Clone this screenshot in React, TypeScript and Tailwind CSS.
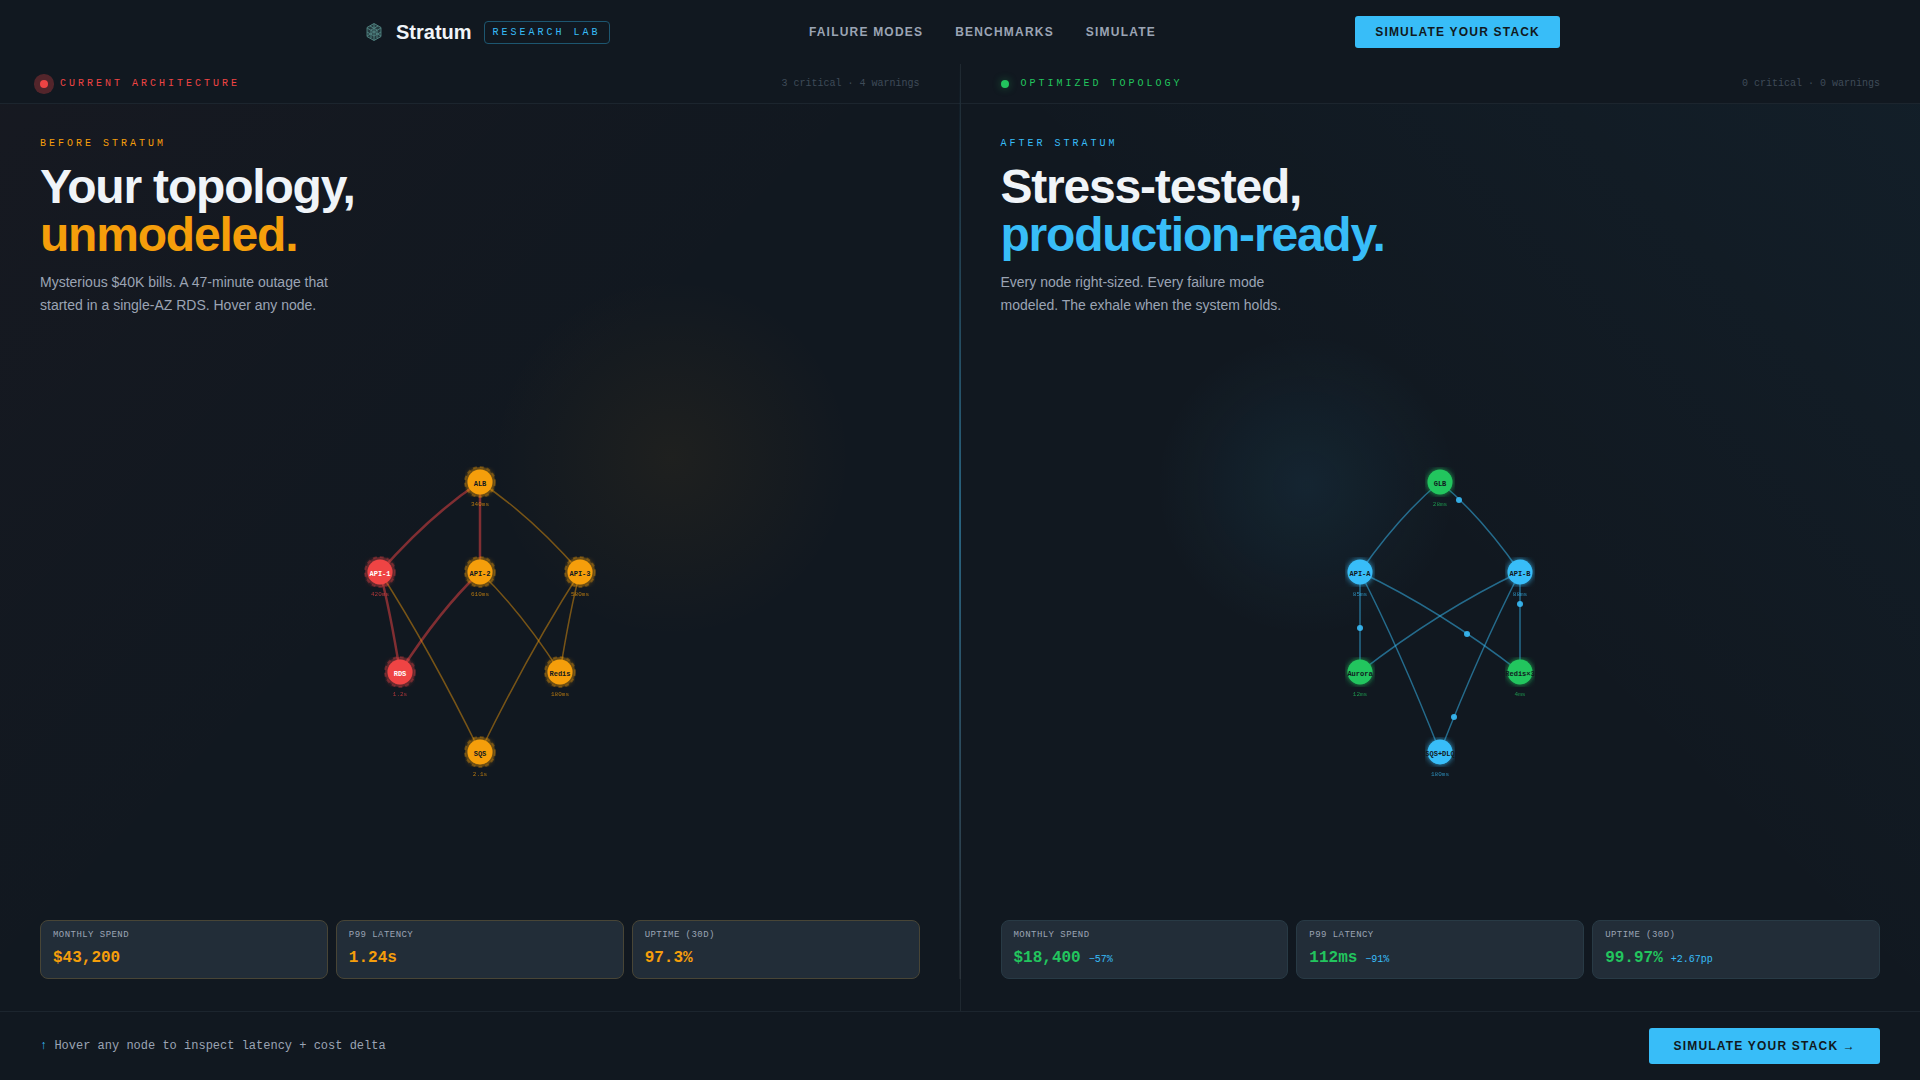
import { Fragment } from 'react';

type Tone = 'red' | 'amber' | 'green' | 'sky';

interface GraphNode {
  id: string;
  x: number;
  y: number;
  latency: string;
  tone: Tone;
}

interface GraphEdge {
  from: string;
  to: string;
  critical?: boolean;
}

interface Stat {
  label: string;
  value: string;
  delta?: string;
}

const toneHex: Record<Tone, string> = {
  red: '#ef4444',
  amber: '#f59e0b',
  green: '#22c55e',
  sky: '#38bdf8',
};

const beforeNodes: GraphNode[] = [
  { id: 'ALB', x: 200, y: 50, latency: '340ms', tone: 'amber' },
  { id: 'API-1', x: 100, y: 140, latency: '420ms', tone: 'red' },
  { id: 'API-2', x: 200, y: 140, latency: '610ms', tone: 'amber' },
  { id: 'API-3', x: 300, y: 140, latency: '580ms', tone: 'amber' },
  { id: 'RDS', x: 120, y: 240, latency: '1.2s', tone: 'red' },
  { id: 'Redis', x: 280, y: 240, latency: '180ms', tone: 'amber' },
  { id: 'SQS', x: 200, y: 320, latency: '2.1s', tone: 'amber' },
];

const beforeEdges: GraphEdge[] = [
  { from: 'ALB', to: 'API-1', critical: true },
  { from: 'ALB', to: 'API-2', critical: true },
  { from: 'ALB', to: 'API-3' },
  { from: 'API-1', to: 'RDS', critical: true },
  { from: 'API-2', to: 'RDS', critical: true },
  { from: 'API-2', to: 'Redis' },
  { from: 'API-3', to: 'Redis' },
  { from: 'API-1', to: 'SQS' },
  { from: 'API-3', to: 'SQS' },
];

const afterNodes: GraphNode[] = [
  { id: 'GLB', x: 200, y: 50, latency: '28ms', tone: 'green' },
  { id: 'API-A', x: 120, y: 140, latency: '85ms', tone: 'sky' },
  { id: 'API-B', x: 280, y: 140, latency: '88ms', tone: 'sky' },
  { id: 'Aurora', x: 120, y: 240, latency: '12ms', tone: 'green' },
  { id: 'Redis×3', x: 280, y: 240, latency: '4ms', tone: 'green' },
  { id: 'SQS+DLQ', x: 200, y: 320, latency: '180ms', tone: 'sky' },
];

const afterEdges: GraphEdge[] = [
  { from: 'GLB', to: 'API-A' },
  { from: 'GLB', to: 'API-B' },
  { from: 'API-A', to: 'Aurora' },
  { from: 'API-A', to: 'Redis×3' },
  { from: 'API-B', to: 'Aurora' },
  { from: 'API-B', to: 'Redis×3' },
  { from: 'API-A', to: 'SQS+DLQ' },
  { from: 'API-B', to: 'SQS+DLQ' },
];

// Request packets travelling along the healthy edges
const packets = [
  { x: 219, y: 68 },
  { x: 120, y: 196 },
  { x: 280, y: 172 },
  { x: 227, y: 202 },
  { x: 214, y: 285 },
];

const beforeStats: Stat[] = [
  { label: 'Monthly spend', value: '$43,200' },
  { label: 'P99 latency', value: '1.24s' },
  { label: 'Uptime (30d)', value: '97.3%' },
];

const afterStats: Stat[] = [
  { label: 'Monthly spend', value: '$18,400', delta: '−57%' },
  { label: 'P99 latency', value: '112ms', delta: '−91%' },
  { label: 'Uptime (30d)', value: '99.97%', delta: '+2.67pp' },
];

const mono = "font-['Liberation_Mono',monospace]";

const Logo = () => (
  <svg width="28" height="28" viewBox="0 0 28 28" fill="none" aria-hidden="true">
    <path d="M14 5 L21 9 V19 L14 23 L7 19 V9 Z" fill="#5f9c98" opacity="0.25" />
    <g stroke="#5f9c98" strokeWidth="1" opacity="0.7">
      <path d="M14 5.5 L21 9.5 V18.5 L14 22.5 L7 18.5 V9.5 Z" />
      <path d="M7 10 L14 14 L21 10 M14 14 V22" />
      <path d="M14 6 V14 M7 18 L14 14 L21 18" />
      <path d="M10 8 L17 12 V20 M18 8 L11 12 V20 M7 14 L14 18 L21 14" />
    </g>
  </svg>
);

const Topology = ({ nodes, edges, healthy, label }: { nodes: GraphNode[]; edges: GraphEdge[]; healthy?: boolean; label: string }) => {
  const find = (id: string) => nodes.find((n) => n.id === id)!;
  const glowId = healthy ? 'glow-after' : 'glow-before';

  return (
    <svg viewBox="0 0 400 380" className="w-[400px] max-w-full" role="img" aria-label={label}>
      <defs>
        <filter id={glowId}>
          <feGaussianBlur stdDeviation="3" result="blur" />
          <feMerge>
            <feMergeNode in="blur" />
            <feMergeNode in="SourceGraphic" />
          </feMerge>
        </filter>
      </defs>
      {edges.map((edge) => {
        const a = find(edge.from);
        const b = find(edge.to);
        return (
          <path
            key={`${edge.from}-${edge.to}`}
            d={`M ${a.x} ${a.y} Q ${(a.x + b.x) / 2} ${(a.y + b.y) / 2 - 12} ${b.x} ${b.y}`}
            fill="none"
            stroke={healthy ? '#38bdf8' : edge.critical ? '#ef4444' : '#f59e0b'}
            strokeWidth={edge.critical ? 2.5 : 1.5}
            opacity={edge.critical || healthy ? 0.5 : 0.45}
          />
        );
      })}
      {healthy && packets.map((p) => <circle key={`${p.x}-${p.y}`} cx={p.x} cy={p.y} r="3" fill="#38bdf8" opacity="0.9" />)}
      {nodes.map((node) => (
        <Fragment key={node.id}>
          {!healthy && (
            <circle cx={node.x} cy={node.y} r="15" fill={toneHex[node.tone]} fillOpacity="0.15" stroke={toneHex[node.tone]} strokeWidth="2" strokeDasharray="4 3" strokeOpacity="0.3" />
          )}
          <g filter={`url(#${glowId})`}>
            <circle cx={node.x} cy={node.y} r="12" fill={toneHex[node.tone]} />
          </g>
          <circle cx={node.x} cy={node.y} r="12.5" fill={toneHex[node.tone]} />
          <text x={node.x} y={node.y + 4} textAnchor="middle" fontSize="7" fontWeight="700" fill={node.tone === 'red' ? '#ffffff' : '#111820'} className={mono}>
            {node.id}
          </text>
          <text x={node.x} y={node.y + 24} textAnchor="middle" fontSize="6" fill={toneHex[node.tone]} opacity="0.7" className={mono}>
            {node.latency}
          </text>
        </Fragment>
      ))}
    </svg>
  );
};

const StatCards = ({ stats, healthy }: { stats: Stat[]; healthy?: boolean }) => (
  <dl className="grid grid-cols-3 gap-2">
    {stats.map((stat) => (
      <div key={stat.label} className={`rounded-lg border bg-[#222d38] px-3 pt-2 pb-[9px] ${healthy ? 'border-[#283a45]' : 'border-[#484536]'}`}>
        <dt className={`${mono} text-[9px] leading-3 tracking-wider text-[#9ba4b4] uppercase`}>{stat.label}</dt>
        <dd className={`${mono} mt-1.5 flex items-baseline gap-2`}>
          <span className={`text-base leading-[22px] font-bold ${healthy ? 'text-[#22c55e]' : 'text-[#f59e0b]'}`}>{stat.value}</span>
          {stat.delta && <span className="text-[10px] leading-3 text-[#38bdf8]">{stat.delta}</span>}
        </dd>
      </div>
    ))}
  </dl>
);

export default function App() {
  return (
    <div className="flex min-h-screen flex-col bg-[#111820] font-['Liberation_Sans',sans-serif] text-[#f0f4f8]">
      <header className="h-16">
        <div className="mx-auto flex h-full max-w-[1200px] items-center justify-between">
          <div className="flex items-center">
            <a href="#" className="flex items-center gap-2">
              <Logo />
              <span className="text-xl font-bold">Stratum</span>
            </a>
            <span className={`${mono} ml-3 rounded-sm border border-[#1d5670] px-2 py-[3px] text-[10px] leading-[15px] tracking-[3px] text-[#38bdf8] uppercase`}>
              Research Lab
            </span>
          </div>
          <nav className="flex items-center gap-8 text-xs font-bold tracking-widest text-[#9ba4b4] uppercase">
            <a href="#failure-modes">Failure Modes</a>
            <a href="#benchmarks">Benchmarks</a>
            <a href="#simulate">Simulate</a>
          </nav>
          <button type="button" className="h-8 rounded-[3px] bg-[#38bdf8] px-5 text-xs font-bold tracking-widest text-[#111820] uppercase">
            Simulate Your Stack
          </button>
        </div>
      </header>

      <main className="grid flex-1 grid-cols-[minmax(0,1fr)_1px_minmax(0,1fr)]">
        {/* Before */}
        <section className="flex flex-col">
          <div className="flex h-10 items-center justify-between border-b border-[#1c252e] px-10">
            <div className="flex items-center gap-3">
              <span className="size-2 rounded-full bg-[#ef4444] shadow-[0_0_0_6px_rgba(239,68,68,0.3)]" />
              <span className={`${mono} text-[10px] tracking-[3px] text-[#ef4444] uppercase`}>Current Architecture</span>
            </div>
            <span className={`${mono} text-[10px] text-[#3f4b58]`}>3 critical · 4 warnings</span>
          </div>
          <div className="flex flex-1 flex-col bg-[radial-gradient(circle_180px_at_70%_39%,rgba(245,158,11,0.06),transparent),linear-gradient(135deg,rgba(239,68,68,0.025),transparent_50%)] px-10 py-8">
            <p className={`${mono} text-[10px] leading-[15px] tracking-[3px] text-[#f59e0b] uppercase`}>Before Stratum</p>
            <h1 className="mt-3 text-5xl leading-[48px] font-bold tracking-tight">
              Your topology,
              <br />
              <span className="text-[#f59e0b]">unmodeled.</span>
            </h1>
            <p className="mt-3 max-w-[320px] text-sm leading-[23px] text-[#9ba4b4]">
              Mysterious $40K bills. A 47-minute outage that started in a single-AZ RDS. Hover any node.
            </p>
            <div className="flex flex-1 items-center justify-center pt-1.5">
              <Topology nodes={beforeNodes} edges={beforeEdges} label="Current architecture graph" />
            </div>
            <StatCards stats={beforeStats} />
          </div>
        </section>

        <div className="relative bg-[#1f2830]">
          <div className="absolute top-0 bottom-8 -left-px w-0.5 bg-linear-to-b from-transparent via-[#38bdf8]/40 to-white/5" />
        </div>

        {/* After */}
        <section className="flex flex-col">
          <div className="flex h-10 items-center justify-between border-b border-[#1c252e] px-10">
            <div className="flex items-center gap-3">
              <span className="size-2 rounded-full bg-[#22c55e] shadow-[0_0_8px_rgba(34,197,94,0.4)]" />
              <span className={`${mono} text-[10px] tracking-[3px] text-[#22c55e] uppercase`}>Optimized Topology</span>
            </div>
            <span className={`${mono} text-[10px] text-[#3f4b58]`}>0 critical · 0 warnings</span>
          </div>
          <div className="flex flex-1 flex-col bg-[radial-gradient(circle_150px_at_36%_42%,rgba(56,189,248,0.08),transparent),linear-gradient(225deg,rgba(56,189,248,0.04),transparent_50%)] px-10 py-8">
            <p className={`${mono} text-[10px] leading-[15px] tracking-[3px] text-[#38bdf8] uppercase`}>After Stratum</p>
            <h2 className="mt-3 text-5xl leading-[48px] font-bold tracking-tight">
              Stress-tested,
              <br />
              <span className="text-[#38bdf8]">production-ready.</span>
            </h2>
            <p className="mt-3 max-w-[320px] text-sm leading-[23px] text-[#9ba4b4]">
              Every node right-sized. Every failure mode modeled. The exhale when the system holds.
            </p>
            <div className="flex flex-1 items-center justify-center pt-1.5">
              <Topology nodes={afterNodes} edges={afterEdges} healthy label="Optimized topology graph" />
            </div>
            <StatCards stats={afterStats} healthy />
          </div>
        </section>
      </main>

      <footer className="flex items-center justify-between border-t border-[#1c252e] px-10 py-4">
        <p className={`${mono} text-xs text-[#9ba4b4]`}>
          <span className="text-[#38bdf8]">↑</span> Hover any node to inspect latency + cost delta
        </p>
        <button type="button" className="h-9 rounded-[3px] bg-[#38bdf8] px-6 text-xs font-bold tracking-widest text-[#111820] uppercase">
          Simulate Your Stack →
        </button>
      </footer>
    </div>
  );
}
